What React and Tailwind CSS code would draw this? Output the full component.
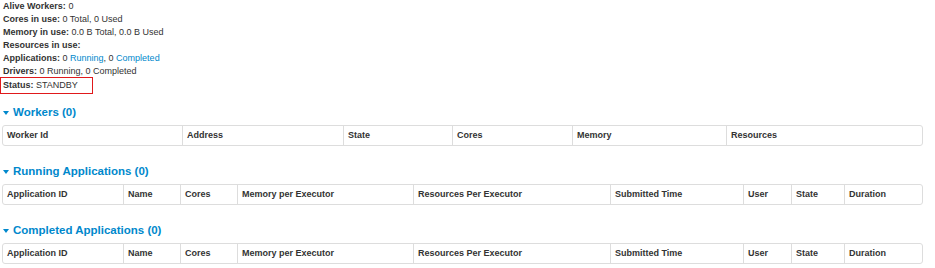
const workerCols = [
  { label: "Worker Id", w: "w-[179px]" },
  { label: "Address", w: "w-[161px]" },
  { label: "State", w: "w-[109px]" },
  { label: "Cores", w: "w-[120px]" },
  { label: "Memory", w: "w-[154px]" },
  { label: "Resources", w: "flex-1" },
];

const appCols = [
  { label: "Application ID", w: "w-[120px]" },
  { label: "Name", w: "w-[57px]" },
  { label: "Cores", w: "w-[57px]" },
  { label: "Memory per Executor", w: "w-[176px]" },
  { label: "Resources Per Executor", w: "w-[197px]" },
  { label: "Submitted Time", w: "w-[133px]" },
  { label: "User", w: "w-[48px]" },
  { label: "State", w: "w-[53px]" },
  { label: "Duration", w: "flex-1" },
];

const Caret = () => (
  <span className="mr-[4px] mt-[1px] inline-block h-0 w-0 border-x-[3px] border-t-[4px] border-x-transparent border-t-[#0088cc] align-middle" />
);

const Section = ({ title, cols }) => (
  <div className="mb-[16px]">
    <h4 className="flex h-[18px] items-center pl-[3px] text-[11.5px] font-bold leading-[18px] text-[#0088cc]">
      <Caret />
      {title}
    </h4>
    <div className="ml-[2px] mt-[4px] flex h-[21px] w-[921px] rounded-[3px] border border-[#dddddd]">
      {cols.map((c, i) => (
        <div
          key={c.label}
          className={`${c.w} flex items-center px-[4px] text-[9px] font-bold text-[#333333] ${i > 0 ? "border-l border-[#dddddd]" : ""}`}
        >
          {c.label}
        </div>
      ))}
    </div>
  </div>
);

const Line = ({ label, children }) => (
  <li className="h-[13px] leading-[13px]">
    <strong>{label}</strong> {children}
  </li>
);

export default function App() {
  return (
    <div
      className="h-[268px] w-[935px] overflow-hidden bg-white text-[9px] text-[#333333]"
      style={{ fontFamily: '"Liberation Sans", Arial, sans-serif' }}
    >
      <ul className="pl-[3px]">
        <Line label="Alive Workers:">0</Line>
        <Line label="Cores in use:">0 Total, 0 Used</Line>
        <Line label="Memory in use:">0.0 B Total, 0.0 B Used</Line>
        <Line label="Resources in use:"></Line>
        <Line label="Applications:">
          0 <a className="text-[#0088cc]">Running</a>, 0{" "}
          <a className="text-[#0088cc]">Completed</a>
        </Line>
        <Line label="Drivers:">0 Running, 0 Completed</Line>
      </ul>
      <div className="-mt-[1px] flex h-[17px] w-[93px] items-center border border-[#e0191b] pl-[2px]">
        <strong>Status:</strong>&nbsp;STANDBY
      </div>
      <div className="mt-[9px]">
        <Section title="Workers (0)" cols={workerCols} />
        <Section title="Running Applications (0)" cols={appCols} />
        <Section title="Completed Applications (0)" cols={appCols} />
      </div>
    </div>
  );
}
